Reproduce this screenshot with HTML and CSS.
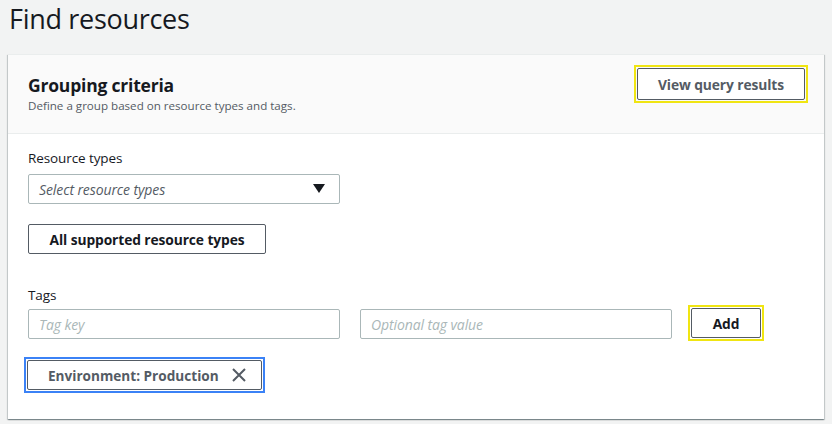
FILE: index.html
```html
<!DOCTYPE html>
<html>
<head>
<meta charset="utf-8">
<link rel="stylesheet" href="styles.css">
</head>
<body>
<div class="page">
  <h1 class="title">Find resources</h1>
  <div class="card">
    <div class="card-header">
      <div class="header-text">
        <h2 class="card-title">Grouping criteria</h2>
        <p class="card-desc">Define a group based on resource types and tags.</p>
      </div>
      <div class="focus-yellow"><button class="btn btn-wide">View query results</button></div>
    </div>
    <div class="card-body">
      <div class="label">Resource types</div>
      <div class="select">
        <span class="placeholder">Select resource types</span>
        <svg class="caret" width="12" height="10" viewBox="0 0 12 10"><path d="M0 0 H12 L6 9 Z" fill="#16191f"/></svg>
      </div>
      <button class="btn btn-all">All supported resource types</button>
      <div class="label label-tags">Tags</div>
      <div class="tag-row">
        <div class="input"><span class="placeholder">Tag key</span></div>
        <div class="input"><span class="placeholder">Optional tag value</span></div>
        <div class="focus-yellow"><button class="btn btn-add">Add</button></div>
      </div>
      <div class="focus-blue">
        <div class="token">
          <span>Environment: Production</span>
          <svg width="16" height="16" viewBox="0 0 16 16"><path d="M2 2 L14 14 M14 2 L2 14" stroke="#545b64" stroke-width="2" fill="none"/></svg>
        </div>
      </div>
    </div>
  </div>
</div>
</body>
</html>
```
FILE: styles.css
```css
* { box-sizing: border-box; }
html, body { margin: 0; padding: 0; }
body {
  background: #f2f3f3;
  font-family: "Open Sans", "Noto Sans", sans-serif;
  color: #16191f;
  width: 832px;
  height: 424px;
  overflow: hidden;
}
.page { padding: 0 8px 0 8px; }
.title {
  margin: 0;
  padding: 0 0 0 1px;
  font-size: 27px;
  font-weight: 400;
  line-height: 38px;
  height: 54px;
  letter-spacing: -0.3px;
  color: #16191f;
}
.card {
  width: 816px;
  background: #fff;
  box-shadow: 0 1px 1px 0 rgba(0,28,36,.3), 1px 1px 1px 0 rgba(0,28,36,.15), -1px 1px 1px 0 rgba(0,28,36,.15);
  border-top: 1px solid #eaeded;
}
.card-header {
  background: #fafafa;
  border-bottom: 1px solid #eaeded;
  height: 79px;
  display: flex;
  justify-content: space-between;
  padding: 10px 16px 0 20px;
}
.header-text { padding-top: 9px; }
.card-title {
  margin: 0;
  font-size: 17.5px;
  font-weight: 700;
  line-height: 22px;
  letter-spacing: -0.2px;
}
.card-desc {
  margin: 2px 0 0 0;
  font-size: 11.6px;
  line-height: 16px;
  color: #545b64;
}
.focus-yellow {
  border: 2px solid #f0e512;
  padding: 1px;
  align-self: flex-start;
}
.btn {
  font-family: inherit;
  background: #fff;
  border: 1px solid #545b64;
  border-radius: 2px;
  color: #545b64;
  font-weight: 700;
  font-size: 13.8px;
  height: 32px;
  padding: 0 12px;
  letter-spacing: -0.1px;
  display: block;
}
.btn-wide { width: 168px; }
.card-body { padding: 15px 20px 26px 20px; }
.label {
  font-size: 13.5px;
  line-height: 18px;
  color: #16191f;
  letter-spacing: -0.1px;
}
.select, .input {
  width: 312px;
  height: 30px;
  border: 1px solid #aab7b8;
  border-radius: 2px;
  display: flex;
  align-items: center;
  justify-content: space-between;
  padding: 0 14px 0 10px;
}
.select { margin-top: 7px; }
.placeholder {
  font-style: italic;
  font-size: 14px;
  color: #879596;
  letter-spacing: -0.1px;
}
.select .placeholder { color: #545b64; }
.caret { display: block; }
.btn-all {
  margin-top: 20px;
  width: 238px;
  height: 30px;
  color: #16191f;
  border-color: #545b64;
}
.label-tags { margin-top: 32px; }
.tag-row {
  display: flex;
  gap: 20px;
  margin-top: 5px;
  align-items: flex-start;
}
.tag-row .input .placeholder { color: #aab7b8; }
.tag-row .focus-yellow { margin-top: -4px; margin-left: -4px; }
.btn-add {
  width: 70px;
  height: 30px;
  padding: 0;
  color: #16191f;
}
.focus-blue {
  margin-top: 16px;
  margin-left: -4px;
  width: 241px;
  border: 2px solid #3b82f6;
  padding: 1px;
}
.token {
  height: 30px;
  border: 1px solid #545b64;
  border-radius: 2px;
  display: flex;
  align-items: center;
  justify-content: space-between;
  padding: 0 14px 0 20px;
  font-weight: 700;
  font-size: 13.6px;
  color: #545b64;
}
.token svg { display: block; }
```
